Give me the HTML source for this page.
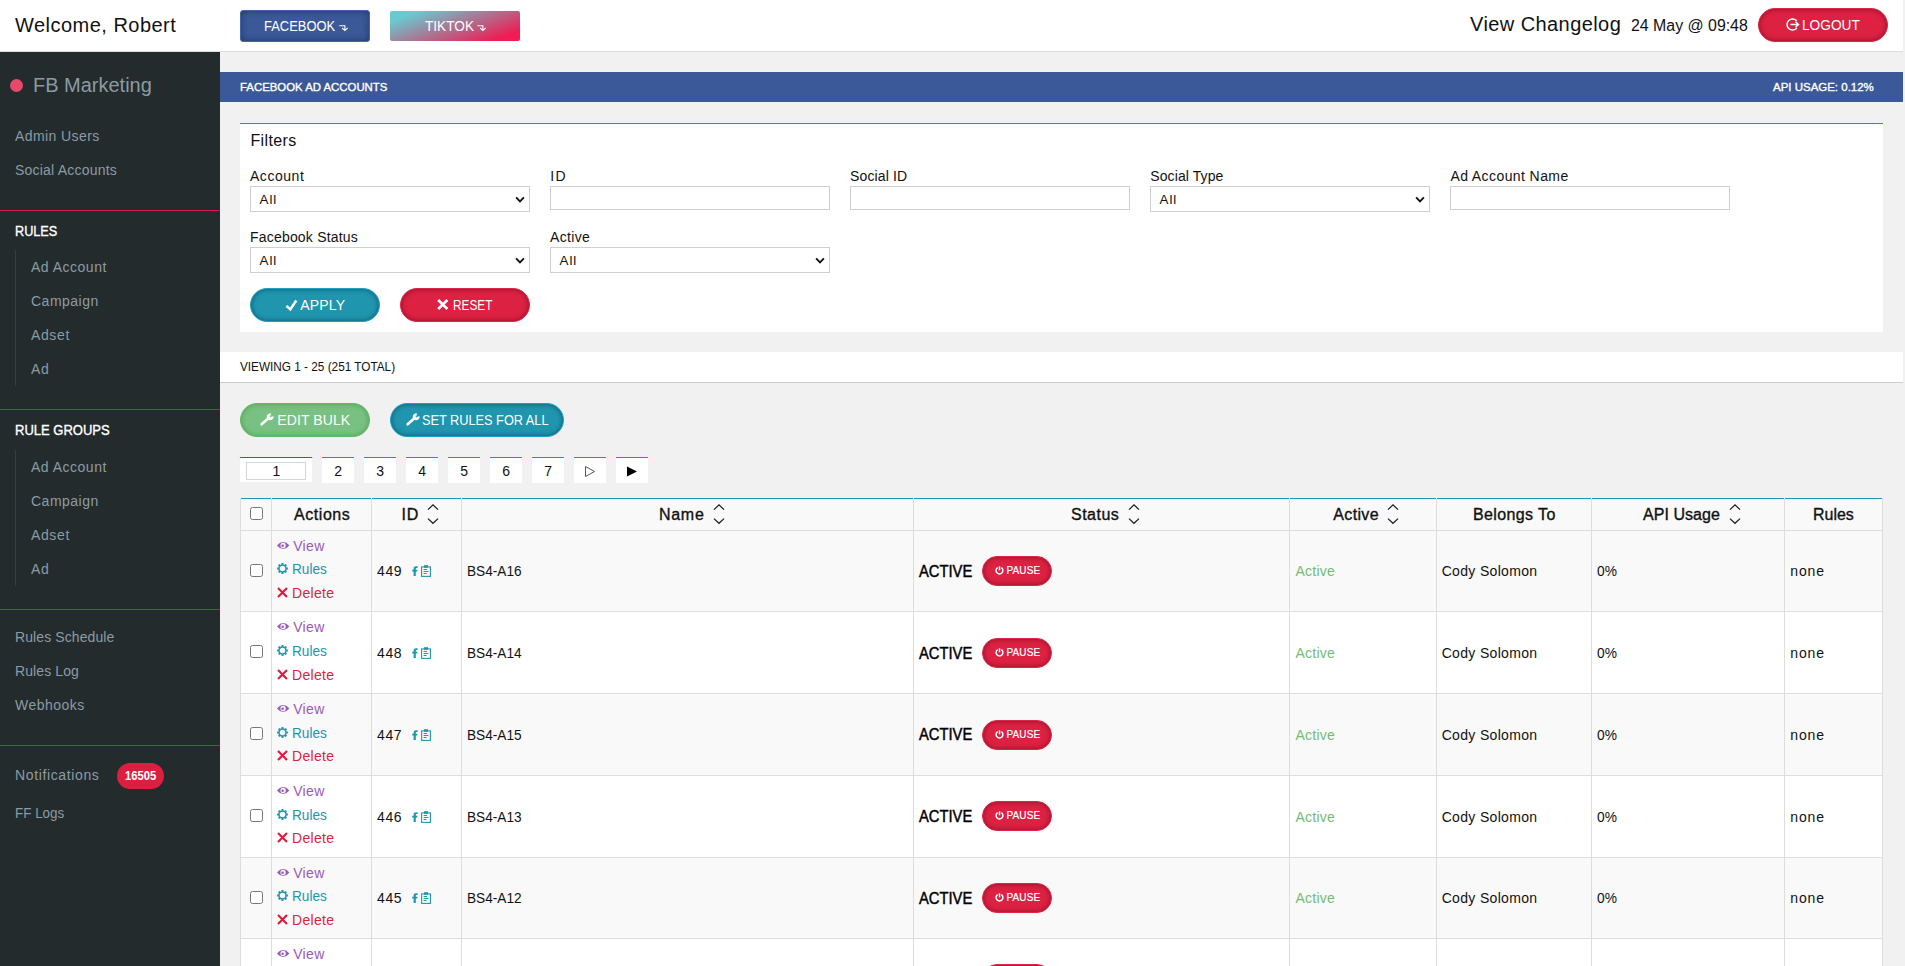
<!DOCTYPE html>
<html><head><meta charset="utf-8"><title>Facebook Ad Accounts</title>
<style>
*{box-sizing:border-box}
html,body{margin:0;padding:0;width:1905px;height:966px;overflow:hidden}
body{width:1905px;height:966px;overflow:hidden;background:#f1f1f1;font-family:"Liberation Sans",sans-serif;font-size:14px;color:#111;position:relative}
#page{position:absolute;left:0;top:0;width:1905px;height:966px;overflow:hidden;background:#f1f1f1}
.abs{position:absolute}
.t{position:absolute;white-space:nowrap;line-height:1}
.m{-webkit-text-stroke:0.35px currentColor}
.m2{-webkit-text-stroke:0.45px currentColor}
.m1{-webkit-text-stroke:0.2px currentColor}
svg{position:absolute;overflow:visible}
</style></head>
<body>
<div id="page">
<div class="abs" style="left:0px;top:0px;width:1903px;height:52px;background:#fff;border-bottom:1px solid #dcdcdc"></div>
<span id="welcome" class="t" style="left:15px;top:15px;font-size:20px;color:#111;letter-spacing:0.476px">Welcome, Robert</span>
<div class="abs" style="left:240px;top:10px;width:130px;height:32px;background:#3b5998;border:1px solid #4464ad;border-radius:3px;box-shadow:inset 0 0 7px rgba(0,0,30,.4)"></div>
<span id="fbbtn" class="t" style="left:263.5px;top:19px;font-size:14px;color:#fff;transform:scaleX(0.9248);transform-origin:0 0">FACEBOOK</span>
<svg style="left:338.6px;top:24.6px" width="9.2" height="6.4" viewBox="0 0 10 7"><path d="M0.4 0.9 H6.4 V5.6 M3.4 3.3 L6.4 6.1 L9.4 3.3" fill="none" stroke="#fff" stroke-width="1.2"/></svg>
<div class="abs" style="left:390px;top:11px;width:130px;height:30px;border-radius:2px;background:linear-gradient(160deg,#66ccd2 0%,#69c9d0 14%,#ee1d52 87%,#ee1d52 100%)"></div>
<span id="ttbtn" class="t" style="left:425px;top:19px;font-size:14px;color:#fff;transform:scaleX(0.9735);transform-origin:0 0">TIKTOK</span>
<svg style="left:476.8px;top:24.6px" width="9.2" height="6.4" viewBox="0 0 10 7"><path d="M0.4 0.9 H6.4 V5.6 M3.4 3.3 L6.4 6.1 L9.4 3.3" fill="none" stroke="#fff" stroke-width="1.2"/></svg>
<span id="changelog" class="t" style="left:1470px;top:14px;font-size:20px;color:#111;letter-spacing:0.423px">View Changelog</span>
<span id="date" class="t" style="left:1630.8px;top:18px;font-size:16px;color:#111;transform:scaleX(0.9928);transform-origin:0 0">24 May @ 09:48</span>
<div class="abs" style="left:1758px;top:8px;width:130px;height:34px;background:#dc2142;border:1px solid #dc2646;box-shadow:inset 0 0 5px rgba(80,0,20,.6);border-radius:17px"></div>
<svg style="left:1785.6px;top:17.7px" width="14" height="13" viewBox="0 0 14 13"><path d="M10.9 2.9 A5.6 5.6 0 1 0 10.9 10.1" fill="none" stroke="#fff" stroke-width="1.5"/><path d="M4.4 6.5 H12.2 M9.5 3.8 L12.5 6.5 L9.5 9.2" fill="none" stroke="#fff" stroke-width="1.5"/></svg>
<span id="logout" class="t" style="left:1802.4px;top:18px;font-size:14px;color:#fff;transform:scaleX(0.9773);transform-origin:0 0">LOGOUT</span>
<div class="abs" style="left:0px;top:52px;width:220px;height:914px;background:#232b2d"></div>
<div class="abs" style="left:10px;top:79px;width:13px;height:13px;border-radius:50%;background:#e8486a"></div>
<span id="fbm" class="t" style="left:32.5px;top:75px;font-size:20px;color:#8c9ba3;transform:scaleX(0.9988);transform-origin:0 0">FB Marketing</span>
<span id="s_admin" class="t" style="left:15px;top:129px;font-size:14px;color:#8c9ba3;letter-spacing:0.416px">Admin Users</span>
<span id="s_social" class="t" style="left:15px;top:163px;font-size:14px;color:#8c9ba3;letter-spacing:0.211px">Social Accounts</span>
<div class="abs" style="left:0px;top:210px;width:220px;height:1px;background:#d81e3f"></div>
<span id="s_rules" class="t m" style="left:15px;top:224px;font-size:14px;color:#fff;transform:scaleX(0.9044);transform-origin:0 0">RULES</span>
<div class="abs" style="left:15px;top:250px;width:1px;height:136px;background:#363e41"></div>
<span id="s_r1" class="t" style="left:31px;top:260px;font-size:14px;color:#8c9ba3;letter-spacing:0.497px">Ad Account</span>
<span id="s_r2" class="t" style="left:31px;top:294px;font-size:14px;color:#8c9ba3;letter-spacing:0.496px">Campaign</span>
<span id="s_r3" class="t" style="left:31px;top:328px;font-size:14px;color:#8c9ba3;letter-spacing:0.622px">Adset</span>
<span id="s_r4" class="t" style="left:31px;top:362px;font-size:14px;color:#8c9ba3;letter-spacing:0.675px">Ad</span>
<div class="abs" style="left:0px;top:409px;width:220px;height:1px;background:#d81e3f"></div>
<span id="s_rg" class="t m" style="left:15px;top:423px;font-size:14px;color:#fff;transform:scaleX(0.9296);transform-origin:0 0">RULE GROUPS</span>
<div class="abs" style="left:15px;top:450px;width:1px;height:136px;background:#363e41"></div>
<span id="s_g1" class="t" style="left:31px;top:460px;font-size:14px;color:#8c9ba3;letter-spacing:0.497px">Ad Account</span>
<span id="s_g2" class="t" style="left:31px;top:494px;font-size:14px;color:#8c9ba3;letter-spacing:0.496px">Campaign</span>
<span id="s_g3" class="t" style="left:31px;top:528px;font-size:14px;color:#8c9ba3;letter-spacing:0.622px">Adset</span>
<span id="s_g4" class="t" style="left:31px;top:562px;font-size:14px;color:#8c9ba3;letter-spacing:0.675px">Ad</span>
<div class="abs" style="left:0px;top:609px;width:220px;height:1px;background:#d81e3f"></div>
<span id="s_sched" class="t" style="left:15px;top:630px;font-size:14px;color:#8c9ba3;letter-spacing:0.095px">Rules Schedule</span>
<span id="s_log" class="t" style="left:15px;top:664px;font-size:14px;color:#8c9ba3;letter-spacing:0.094px">Rules Log</span>
<span id="s_web" class="t" style="left:15px;top:698px;font-size:14px;color:#8c9ba3;letter-spacing:0.485px">Webhooks</span>
<div class="abs" style="left:0px;top:745px;width:220px;height:1px;background:#d81e3f"></div>
<span id="s_notif" class="t" style="left:15px;top:768px;font-size:14px;color:#8c9ba3;letter-spacing:0.628px">Notifications</span>
<div class="abs" style="left:117px;top:763px;width:47px;height:26px;border-radius:13px;background:#dc1f40"></div>
<span id="badge" class="t" style="left:125.3px;top:770px;font-size:12px;color:#fff;font-weight:bold;transform:scaleX(0.9363);transform-origin:0 0">16505</span>
<span id="s_ff" class="t" style="left:15px;top:806px;font-size:14px;color:#8c9ba3;transform:scaleX(0.9593);transform-origin:0 0">FF Logs</span>
<div class="abs" style="left:220px;top:72px;width:1683px;height:30px;background:#3b5998"></div>
<span id="title" class="t m" style="left:240.3px;top:82px;font-size:11.5px;color:#fff;transform:scaleX(0.9898);transform-origin:0 0">FACEBOOK AD ACCOUNTS</span>
<span id="api" class="t m" style="left:1772.5px;top:82px;font-size:11.5px;color:#fff;transform:scaleX(0.9980);transform-origin:0 0">API USAGE: 0.12%</span>
<div class="abs" style="left:240px;top:123px;width:1643px;height:209px;background:#fff;border-top:1px solid #2096ae"></div>
<span id="filters" class="t" style="left:250.4px;top:133px;font-size:16px;color:#111;letter-spacing:0.373px">Filters</span>
<span id="l_acc" class="t" style="left:250px;top:169px;font-size:14px;color:#111;letter-spacing:0.534px">Account</span>
<div class="abs" style="left:250px;top:186px;width:280px;height:26px;background:#fff;border:1px solid #cfcfcf"></div>
<svg style="left:514.6px;top:195.8px" width="10" height="8" viewBox="0 0 10 8"><path d="M1.1 1.4 L5 5.3 L8.9 1.4" fill="none" stroke="#111" stroke-width="1.9"/></svg>
<span id="sel1" class="t" style="left:259.6px;top:193px;font-size:13.33px;color:#111;letter-spacing:0.894px">All</span>
<span id="l_id" class="t" style="left:550.2px;top:169px;font-size:14px;color:#111;letter-spacing:1.400px">ID</span>
<div class="abs" style="left:550px;top:186px;width:280px;height:24px;background:#fff;border:1px solid #cfcfcf"></div>
<span id="l_sid" class="t" style="left:850px;top:169px;font-size:14px;color:#111;letter-spacing:0.134px">Social ID</span>
<div class="abs" style="left:850px;top:186px;width:280px;height:24px;background:#fff;border:1px solid #cfcfcf"></div>
<span id="l_st" class="t" style="left:1150.3px;top:169px;font-size:14px;color:#111;letter-spacing:0.097px">Social Type</span>
<div class="abs" style="left:1150px;top:186px;width:280px;height:26px;background:#fff;border:1px solid #cfcfcf"></div>
<svg style="left:1414.6px;top:195.8px" width="10" height="8" viewBox="0 0 10 8"><path d="M1.1 1.4 L5 5.3 L8.9 1.4" fill="none" stroke="#111" stroke-width="1.9"/></svg>
<span id="sel2" class="t" style="left:1159.6px;top:193px;font-size:13.33px;color:#111;letter-spacing:0.894px">All</span>
<span id="l_an" class="t" style="left:1450.4px;top:169px;font-size:14px;color:#111;letter-spacing:0.410px">Ad Account Name</span>
<div class="abs" style="left:1450px;top:186px;width:280px;height:24px;background:#fff;border:1px solid #cfcfcf"></div>
<span id="l_fs" class="t" style="left:250px;top:230px;font-size:14px;color:#111;letter-spacing:0.196px">Facebook Status</span>
<div class="abs" style="left:250px;top:247px;width:280px;height:26px;background:#fff;border:1px solid #cfcfcf"></div>
<svg style="left:514.6px;top:256.8px" width="10" height="8" viewBox="0 0 10 8"><path d="M1.1 1.4 L5 5.3 L8.9 1.4" fill="none" stroke="#111" stroke-width="1.9"/></svg>
<span id="sel3" class="t" style="left:259.6px;top:254px;font-size:13.33px;color:#111;letter-spacing:0.894px">All</span>
<span id="l_act" class="t" style="left:550px;top:230px;font-size:14px;color:#111;letter-spacing:0.335px">Active</span>
<div class="abs" style="left:550px;top:247px;width:280px;height:26px;background:#fff;border:1px solid #cfcfcf"></div>
<svg style="left:814.6px;top:256.8px" width="10" height="8" viewBox="0 0 10 8"><path d="M1.1 1.4 L5 5.3 L8.9 1.4" fill="none" stroke="#111" stroke-width="1.9"/></svg>
<span id="sel4" class="t" style="left:559.6px;top:254px;font-size:13.33px;color:#111;letter-spacing:0.894px">All</span>
<div class="abs" style="left:250px;top:288px;width:130px;height:34px;background:#2095ae;border:1px solid #1ba3c6;box-shadow:inset 0 0 5px rgba(0,40,60,.6);border-radius:17px"></div>
<svg style="left:285px;top:298.5px" width="13" height="12" viewBox="0 0 13 12"><path d="M1.4 6.9 L5.3 10.4 L11.3 1.5" fill="none" stroke="#fff" stroke-width="2.5"/></svg>
<span id="apply" class="t" style="left:300.2px;top:298px;font-size:14px;color:#fff;letter-spacing:0.173px">APPLY</span>
<div class="abs" style="left:400px;top:288px;width:130px;height:34px;background:#dc2142;border:1px solid #dc2646;box-shadow:inset 0 0 5px rgba(80,0,20,.6);border-radius:17px"></div>
<svg style="left:437.4px;top:299px" width="11.6" height="11" viewBox="0 0 11.6 11"><path d="M1.2 1 L10.4 10 M10.4 1 L1.2 10" stroke="#fff" stroke-width="2.6" fill="none"/></svg>
<span id="reset" class="t" style="left:453.1px;top:298px;font-size:14px;color:#fff;transform:scaleX(0.8434);transform-origin:0 0">RESET</span>
<div class="abs" style="left:220px;top:352px;width:1683px;height:31px;background:#fff;border-bottom:1px solid #cccccc"></div>
<span id="viewing" class="t" style="left:240px;top:361px;font-size:12px;color:#111;transform:scaleX(0.9812);transform-origin:0 0">VIEWING 1 - 25 (251 TOTAL)</span>
<div class="abs" style="left:240px;top:403px;width:130px;height:34px;background:#79c182;border:1px solid #62b76b;box-shadow:inset 0 0 5px rgba(50,150,60,.7);border-radius:17px"></div>
<svg style="left:260.2px;top:413px" width="14" height="13" viewBox="0 0 14 13"><path d="M1.6 11.3 L9.3 4.6" stroke="#fff" stroke-width="2.6" stroke-linecap="round" fill="none"/><path d="M12.38 3.53 A2.2 2.2 0 1 1 10.69 1.66" fill="none" stroke="#fff" stroke-width="2.6"/></svg>
<span id="editbulk" class="t" style="left:277.3px;top:413px;font-size:14px;color:#fff;letter-spacing:0.099px">EDIT BULK</span>
<div class="abs" style="left:390px;top:403px;width:174px;height:34px;background:#2095ae;border:1px solid #1ba3c6;box-shadow:inset 0 0 5px rgba(0,40,60,.6);border-radius:17px"></div>
<svg style="left:405.6px;top:413px" width="14" height="13" viewBox="0 0 14 13"><path d="M1.6 11.3 L9.3 4.6" stroke="#fff" stroke-width="2.6" stroke-linecap="round" fill="none"/><path d="M12.38 3.53 A2.2 2.2 0 1 1 10.69 1.66" fill="none" stroke="#fff" stroke-width="2.6"/></svg>
<span id="setrules" class="t" style="left:422.4px;top:413px;font-size:14px;color:#fff;transform:scaleX(0.9102);transform-origin:0 0">SET RULES FOR ALL</span>
<div class="abs" style="left:240px;top:457px;width:72px;height:25px;background:#fff;border-top:1px solid #dc1f40"></div>
<div class="abs" style="left:246px;top:462px;width:60px;height:18px;background:#fff;border:1px solid #d4d4d4"></div>
<span id="pg1" class="t" style="left:272.5px;top:464px;font-size:14px;color:#111">1</span>
<div class="abs" style="left:322px;top:457px;width:32px;height:26px;background:#fff;border-top:1px solid #2096ae"></div>
<span id="pg2" class="t" style="left:334.2px;top:464px;font-size:14px;color:#111">2</span>
<div class="abs" style="left:364px;top:457px;width:32px;height:26px;background:#fff;border-top:1px solid #2096ae"></div>
<span id="pg3" class="t" style="left:376.2px;top:464px;font-size:14px;color:#111">3</span>
<div class="abs" style="left:406px;top:457px;width:32px;height:26px;background:#fff;border-top:1px solid #2096ae"></div>
<span id="pg4" class="t" style="left:418.2px;top:464px;font-size:14px;color:#111">4</span>
<div class="abs" style="left:448px;top:457px;width:32px;height:26px;background:#fff;border-top:1px solid #2096ae"></div>
<span id="pg5" class="t" style="left:460.2px;top:464px;font-size:14px;color:#111">5</span>
<div class="abs" style="left:490px;top:457px;width:32px;height:26px;background:#fff;border-top:1px solid #2096ae"></div>
<span id="pg6" class="t" style="left:502.2px;top:464px;font-size:14px;color:#111">6</span>
<div class="abs" style="left:532px;top:457px;width:32px;height:26px;background:#fff;border-top:1px solid #2096ae"></div>
<span id="pg7" class="t" style="left:544.2px;top:464px;font-size:14px;color:#111">7</span>
<div class="abs" style="left:574px;top:457px;width:32px;height:26px;background:#fff;border-top:1px solid #2096ae"></div>
<svg style="left:584px;top:464.5px" width="12" height="13" viewBox="0 0 12 13"><path d="M1.5 1.5 L10.5 6.5 L1.5 11.5 Z" fill="none" stroke="#555" stroke-width="1"/></svg>
<div class="abs" style="left:616px;top:457px;width:32px;height:26px;background:#fff;border-top:1px solid #2096ae"></div>
<svg style="left:626px;top:465.5px" width="12" height="11" viewBox="0 0 12 11"><path d="M1 0.5 L11 5.5 L1 10.5 Z" fill="#000"/></svg>
<div class="abs" style="left:240px;top:498px;width:1643px;height:33px;background:#f9f9f9;border-top:1px solid #2096ae"></div>
<div class="abs" style="left:240px;top:530px;width:1643px;height:81px;background:#f9f9f9;border-top:1px solid #dddddd"></div>
<div class="abs" style="left:240px;top:611px;width:1643px;height:82px;background:#ffffff;border-top:1px solid #dddddd"></div>
<div class="abs" style="left:240px;top:693px;width:1643px;height:82px;background:#f9f9f9;border-top:1px solid #dddddd"></div>
<div class="abs" style="left:240px;top:775px;width:1643px;height:82px;background:#ffffff;border-top:1px solid #dddddd"></div>
<div class="abs" style="left:240px;top:857px;width:1643px;height:81px;background:#f9f9f9;border-top:1px solid #dddddd"></div>
<div class="abs" style="left:240px;top:938px;width:1643px;height:82px;background:#ffffff;border-top:1px solid #dddddd"></div>
<div class="abs" style="left:240px;top:498px;width:1px;height:480px;background:#dddddd"></div>
<div class="abs" style="left:271px;top:498px;width:1px;height:480px;background:#dddddd"></div>
<div class="abs" style="left:371px;top:498px;width:1px;height:480px;background:#dddddd"></div>
<div class="abs" style="left:461px;top:498px;width:1px;height:480px;background:#dddddd"></div>
<div class="abs" style="left:913px;top:498px;width:1px;height:480px;background:#dddddd"></div>
<div class="abs" style="left:1289px;top:498px;width:1px;height:480px;background:#dddddd"></div>
<div class="abs" style="left:1436px;top:498px;width:1px;height:480px;background:#dddddd"></div>
<div class="abs" style="left:1591px;top:498px;width:1px;height:480px;background:#dddddd"></div>
<div class="abs" style="left:1784px;top:498px;width:1px;height:480px;background:#dddddd"></div>
<div class="abs" style="left:1882px;top:498px;width:1px;height:480px;background:#dddddd"></div>
<div class="abs" style="left:250px;top:507px;width:13px;height:13px;background:#fff;border:1px solid #767676;border-radius:2.5px"></div>
<span id="h_act" class="t m" style="left:294px;top:507px;font-size:16px;color:#111;letter-spacing:0.555px">Actions</span>
<span id="h_id" class="t m" style="left:401.4px;top:507px;font-size:16px;color:#111;letter-spacing:0.800px">ID</span>
<svg style="left:427px;top:504px" width="12" height="21" viewBox="0 0 12 21"><path d="M1 5.6 L6 0.9 L11 5.6 M1 14.6 L6 19.3 L11 14.6" fill="none" stroke="#222" stroke-width="1.3"/></svg>
<span id="h_name" class="t m" style="left:659px;top:507px;font-size:16px;color:#111;letter-spacing:0.704px">Name</span>
<svg style="left:712.5px;top:504px" width="12" height="21" viewBox="0 0 12 21"><path d="M1 5.6 L6 0.9 L11 5.6 M1 14.6 L6 19.3 L11 14.6" fill="none" stroke="#222" stroke-width="1.3"/></svg>
<span id="h_status" class="t m" style="left:1071px;top:507px;font-size:16px;color:#111;letter-spacing:0.488px">Status</span>
<svg style="left:1127.5px;top:504px" width="12" height="21" viewBox="0 0 12 21"><path d="M1 5.6 L6 0.9 L11 5.6 M1 14.6 L6 19.3 L11 14.6" fill="none" stroke="#222" stroke-width="1.3"/></svg>
<span id="h_active" class="t m" style="left:1333.3px;top:507px;font-size:16px;color:#111;letter-spacing:0.344px">Active</span>
<svg style="left:1387px;top:504px" width="12" height="21" viewBox="0 0 12 21"><path d="M1 5.6 L6 0.9 L11 5.6 M1 14.6 L6 19.3 L11 14.6" fill="none" stroke="#222" stroke-width="1.3"/></svg>
<span id="h_bel" class="t m" style="left:1473px;top:507px;font-size:16px;color:#111;letter-spacing:0.381px">Belongs To</span>
<span id="h_api" class="t m" style="left:1643px;top:507px;font-size:16px;color:#111;letter-spacing:0.039px">API Usage</span>
<svg style="left:1728.5px;top:504px" width="12" height="21" viewBox="0 0 12 21"><path d="M1 5.6 L6 0.9 L11 5.6 M1 14.6 L6 19.3 L11 14.6" fill="none" stroke="#222" stroke-width="1.3"/></svg>
<span id="h_rules" class="t m" style="left:1813.3px;top:507px;font-size:16px;color:#111;transform:scaleX(0.9974);transform-origin:0 0">Rules</span>
<div class="abs" style="left:250px;top:564px;width:13px;height:13px;background:#fff;border:1px solid #767676;border-radius:2.5px"></div>
<svg style="left:276.9px;top:542px" width="12.4" height="7" viewBox="0 0 12.4 7"><path d="M0 3.5 Q2.9 0 6.2 0 Q9.5 0 12.4 3.5 Q9.5 7 6.2 7 Q2.9 7 0 3.5 Z" fill="#9b59b6"/><circle cx="6.1" cy="3.5" r="2.65" fill="#f9f9f9"/><circle cx="5.6" cy="3.8" r="1.25" fill="#9b59b6"/></svg>
<span id="v0" class="t" style="left:293.2px;top:539px;font-size:14px;color:#9b59b6;letter-spacing:0.335px">View</span>
<svg style="left:276.8px;top:562.6px" width="11" height="11" viewBox="0 0 11 11"><path d="M10.92 4.57 L10.92 6.43 L9.61 6.59 L9.19 7.61 L9.99 8.68 L8.68 9.99 L7.63 9.18 L6.61 9.60 L6.43 10.92 L4.57 10.92 L4.41 9.61 L3.39 9.19 L2.32 9.99 L1.01 8.68 L1.82 7.63 L1.40 6.61 L0.08 6.43 L0.08 4.57 L1.39 4.41 L1.81 3.39 L1.01 2.32 L2.32 1.01 L3.37 1.82 L4.39 1.40 L4.57 0.08 L6.43 0.08 L6.59 1.39 L7.61 1.81 L8.68 1.01 L9.99 2.32 L9.18 3.37 L9.60 4.39 Z" fill="#2096ae"/><circle cx="5.5" cy="5.5" r="2.75" fill="#f9f9f9"/></svg>
<span id="r0" class="t" style="left:291.9px;top:562px;font-size:14px;color:#2096ae;transform:scaleX(0.9715);transform-origin:0 0">Rules</span>
<svg style="left:276.8px;top:587.2px" width="11" height="11" viewBox="0 0 11 11"><path d="M1 1 L10 10 M10 1 L1 10" stroke="#dc1f40" stroke-width="2.2" fill="none"/></svg>
<span id="d0" class="t" style="left:292px;top:586px;font-size:14px;color:#dc1f40;letter-spacing:0.326px">Delete</span>
<span id="i0" class="t" style="left:377.1px;top:564px;font-size:14px;color:#111;letter-spacing:0.520px">449</span>
<svg style="left:412px;top:566.2px" width="6" height="10" viewBox="0 0 6 10"><path d="M1.6 10 V5.6 H0.2 V3.8 H1.6 V2.6 C1.6 1 2.6 0.2 4 0.2 C4.7 0.2 5.3 0.3 5.6 0.35 V1.9 H4.7 C4 1.9 3.8 2.2 3.8 2.8 V3.8 H5.5 L5.25 5.6 H3.8 V10 Z" fill="#2096ae"/></svg>
<svg style="left:421px;top:565px" width="10" height="12" viewBox="0 0 10 12"><rect x="0.6" y="1.9" width="8.8" height="9.5" fill="none" stroke="#2096ae" stroke-width="1.1"/><rect x="3" y="0.2" width="4" height="2.6" fill="#2096ae"/><path d="M2.6 4.5 H6 M2.6 6.5 H7.4 M2.6 8.5 H5.6" stroke="#2096ae" stroke-width="1"/></svg>
<span id="n0" class="t" style="left:467.4px;top:564px;font-size:14px;color:#111;transform:scaleX(0.9738);transform-origin:0 0">BS4-A16</span>
<span id="a0" class="t m2" style="left:919.2px;top:564px;font-size:16px;color:#000;transform:scaleX(0.9211);transform-origin:0 0">ACTIVE</span>
<div class="abs" style="left:982px;top:556px;width:70px;height:30px;background:#dc2142;border:1px solid #dc2646;box-shadow:inset 0 0 5px rgba(80,0,20,.6);border-radius:15px"></div>
<svg style="left:994.6px;top:566.2px" width="9" height="9" viewBox="0 0 9 9"><path d="M2.6 1.7 A3.4 3.4 0 1 0 6.4 1.7" fill="none" stroke="#fff" stroke-width="1.5"/><path d="M4.5 0.3 V4.3" stroke="#fff" stroke-width="1.5"/></svg>
<span id="p0" class="t m1" style="left:1006.6px;top:566px;font-size:10px;color:#fff;letter-spacing:0.082px">PAUSE</span>
<span id="ac0" class="t" style="left:1295.4px;top:564px;font-size:14px;color:#72bd76;letter-spacing:0.255px">Active</span>
<span id="b0" class="t" style="left:1441.7px;top:564px;font-size:14px;color:#111;letter-spacing:0.325px">Cody Solomon</span>
<span id="u0" class="t" style="left:1597.3px;top:564px;font-size:14px;color:#111;transform:scaleX(0.9828);transform-origin:0 0">0%</span>
<span id="ru0" class="t" style="left:1790.3px;top:564px;font-size:14px;color:#111;letter-spacing:0.848px">none</span>
<div class="abs" style="left:250px;top:645px;width:13px;height:13px;background:#fff;border:1px solid #767676;border-radius:2.5px"></div>
<svg style="left:276.9px;top:623px" width="12.4" height="7" viewBox="0 0 12.4 7"><path d="M0 3.5 Q2.9 0 6.2 0 Q9.5 0 12.4 3.5 Q9.5 7 6.2 7 Q2.9 7 0 3.5 Z" fill="#9b59b6"/><circle cx="6.1" cy="3.5" r="2.65" fill="#ffffff"/><circle cx="5.6" cy="3.8" r="1.25" fill="#9b59b6"/></svg>
<span id="v1" class="t" style="left:293.2px;top:620px;font-size:14px;color:#9b59b6;letter-spacing:0.335px">View</span>
<svg style="left:276.8px;top:644.6px" width="11" height="11" viewBox="0 0 11 11"><path d="M10.92 4.57 L10.92 6.43 L9.61 6.59 L9.19 7.61 L9.99 8.68 L8.68 9.99 L7.63 9.18 L6.61 9.60 L6.43 10.92 L4.57 10.92 L4.41 9.61 L3.39 9.19 L2.32 9.99 L1.01 8.68 L1.82 7.63 L1.40 6.61 L0.08 6.43 L0.08 4.57 L1.39 4.41 L1.81 3.39 L1.01 2.32 L2.32 1.01 L3.37 1.82 L4.39 1.40 L4.57 0.08 L6.43 0.08 L6.59 1.39 L7.61 1.81 L8.68 1.01 L9.99 2.32 L9.18 3.37 L9.60 4.39 Z" fill="#2096ae"/><circle cx="5.5" cy="5.5" r="2.75" fill="#ffffff"/></svg>
<span id="r1" class="t" style="left:291.9px;top:644px;font-size:14px;color:#2096ae;transform:scaleX(0.9715);transform-origin:0 0">Rules</span>
<svg style="left:276.8px;top:669.2px" width="11" height="11" viewBox="0 0 11 11"><path d="M1 1 L10 10 M10 1 L1 10" stroke="#dc1f40" stroke-width="2.2" fill="none"/></svg>
<span id="d1" class="t" style="left:292px;top:668px;font-size:14px;color:#dc1f40;letter-spacing:0.326px">Delete</span>
<span id="i1" class="t" style="left:377.1px;top:646px;font-size:14px;color:#111;letter-spacing:0.520px">448</span>
<svg style="left:412px;top:648.2px" width="6" height="10" viewBox="0 0 6 10"><path d="M1.6 10 V5.6 H0.2 V3.8 H1.6 V2.6 C1.6 1 2.6 0.2 4 0.2 C4.7 0.2 5.3 0.3 5.6 0.35 V1.9 H4.7 C4 1.9 3.8 2.2 3.8 2.8 V3.8 H5.5 L5.25 5.6 H3.8 V10 Z" fill="#2096ae"/></svg>
<svg style="left:421px;top:647px" width="10" height="12" viewBox="0 0 10 12"><rect x="0.6" y="1.9" width="8.8" height="9.5" fill="none" stroke="#2096ae" stroke-width="1.1"/><rect x="3" y="0.2" width="4" height="2.6" fill="#2096ae"/><path d="M2.6 4.5 H6 M2.6 6.5 H7.4 M2.6 8.5 H5.6" stroke="#2096ae" stroke-width="1"/></svg>
<span id="n1" class="t" style="left:467.4px;top:646px;font-size:14px;color:#111;transform:scaleX(0.9738);transform-origin:0 0">BS4-A14</span>
<span id="a1" class="t m2" style="left:919.2px;top:646px;font-size:16px;color:#000;transform:scaleX(0.9211);transform-origin:0 0">ACTIVE</span>
<div class="abs" style="left:982px;top:638px;width:70px;height:30px;background:#dc2142;border:1px solid #dc2646;box-shadow:inset 0 0 5px rgba(80,0,20,.6);border-radius:15px"></div>
<svg style="left:994.6px;top:648.2px" width="9" height="9" viewBox="0 0 9 9"><path d="M2.6 1.7 A3.4 3.4 0 1 0 6.4 1.7" fill="none" stroke="#fff" stroke-width="1.5"/><path d="M4.5 0.3 V4.3" stroke="#fff" stroke-width="1.5"/></svg>
<span id="p1" class="t m1" style="left:1006.6px;top:648px;font-size:10px;color:#fff;letter-spacing:0.082px">PAUSE</span>
<span id="ac1" class="t" style="left:1295.4px;top:646px;font-size:14px;color:#72bd76;letter-spacing:0.255px">Active</span>
<span id="b1" class="t" style="left:1441.7px;top:646px;font-size:14px;color:#111;letter-spacing:0.325px">Cody Solomon</span>
<span id="u1" class="t" style="left:1597.3px;top:646px;font-size:14px;color:#111;transform:scaleX(0.9828);transform-origin:0 0">0%</span>
<span id="ru1" class="t" style="left:1790.3px;top:646px;font-size:14px;color:#111;letter-spacing:0.848px">none</span>
<div class="abs" style="left:250px;top:727px;width:13px;height:13px;background:#fff;border:1px solid #767676;border-radius:2.5px"></div>
<svg style="left:276.9px;top:705px" width="12.4" height="7" viewBox="0 0 12.4 7"><path d="M0 3.5 Q2.9 0 6.2 0 Q9.5 0 12.4 3.5 Q9.5 7 6.2 7 Q2.9 7 0 3.5 Z" fill="#9b59b6"/><circle cx="6.1" cy="3.5" r="2.65" fill="#f9f9f9"/><circle cx="5.6" cy="3.8" r="1.25" fill="#9b59b6"/></svg>
<span id="v2" class="t" style="left:293.2px;top:702px;font-size:14px;color:#9b59b6;letter-spacing:0.335px">View</span>
<svg style="left:276.8px;top:726.6px" width="11" height="11" viewBox="0 0 11 11"><path d="M10.92 4.57 L10.92 6.43 L9.61 6.59 L9.19 7.61 L9.99 8.68 L8.68 9.99 L7.63 9.18 L6.61 9.60 L6.43 10.92 L4.57 10.92 L4.41 9.61 L3.39 9.19 L2.32 9.99 L1.01 8.68 L1.82 7.63 L1.40 6.61 L0.08 6.43 L0.08 4.57 L1.39 4.41 L1.81 3.39 L1.01 2.32 L2.32 1.01 L3.37 1.82 L4.39 1.40 L4.57 0.08 L6.43 0.08 L6.59 1.39 L7.61 1.81 L8.68 1.01 L9.99 2.32 L9.18 3.37 L9.60 4.39 Z" fill="#2096ae"/><circle cx="5.5" cy="5.5" r="2.75" fill="#f9f9f9"/></svg>
<span id="r2" class="t" style="left:291.9px;top:726px;font-size:14px;color:#2096ae;transform:scaleX(0.9715);transform-origin:0 0">Rules</span>
<svg style="left:276.8px;top:750.2px" width="11" height="11" viewBox="0 0 11 11"><path d="M1 1 L10 10 M10 1 L1 10" stroke="#dc1f40" stroke-width="2.2" fill="none"/></svg>
<span id="d2" class="t" style="left:292px;top:749px;font-size:14px;color:#dc1f40;letter-spacing:0.326px">Delete</span>
<span id="i2" class="t" style="left:377.1px;top:728px;font-size:14px;color:#111;letter-spacing:0.520px">447</span>
<svg style="left:412px;top:730.2px" width="6" height="10" viewBox="0 0 6 10"><path d="M1.6 10 V5.6 H0.2 V3.8 H1.6 V2.6 C1.6 1 2.6 0.2 4 0.2 C4.7 0.2 5.3 0.3 5.6 0.35 V1.9 H4.7 C4 1.9 3.8 2.2 3.8 2.8 V3.8 H5.5 L5.25 5.6 H3.8 V10 Z" fill="#2096ae"/></svg>
<svg style="left:421px;top:729px" width="10" height="12" viewBox="0 0 10 12"><rect x="0.6" y="1.9" width="8.8" height="9.5" fill="none" stroke="#2096ae" stroke-width="1.1"/><rect x="3" y="0.2" width="4" height="2.6" fill="#2096ae"/><path d="M2.6 4.5 H6 M2.6 6.5 H7.4 M2.6 8.5 H5.6" stroke="#2096ae" stroke-width="1"/></svg>
<span id="n2" class="t" style="left:467.4px;top:728px;font-size:14px;color:#111;transform:scaleX(0.9738);transform-origin:0 0">BS4-A15</span>
<span id="a2" class="t m2" style="left:919.2px;top:727px;font-size:16px;color:#000;transform:scaleX(0.9211);transform-origin:0 0">ACTIVE</span>
<div class="abs" style="left:982px;top:720px;width:70px;height:30px;background:#dc2142;border:1px solid #dc2646;box-shadow:inset 0 0 5px rgba(80,0,20,.6);border-radius:15px"></div>
<svg style="left:994.6px;top:730.2px" width="9" height="9" viewBox="0 0 9 9"><path d="M2.6 1.7 A3.4 3.4 0 1 0 6.4 1.7" fill="none" stroke="#fff" stroke-width="1.5"/><path d="M4.5 0.3 V4.3" stroke="#fff" stroke-width="1.5"/></svg>
<span id="p2" class="t m1" style="left:1006.6px;top:730px;font-size:10px;color:#fff;letter-spacing:0.082px">PAUSE</span>
<span id="ac2" class="t" style="left:1295.4px;top:728px;font-size:14px;color:#72bd76;letter-spacing:0.255px">Active</span>
<span id="b2" class="t" style="left:1441.7px;top:728px;font-size:14px;color:#111;letter-spacing:0.325px">Cody Solomon</span>
<span id="u2" class="t" style="left:1597.3px;top:728px;font-size:14px;color:#111;transform:scaleX(0.9828);transform-origin:0 0">0%</span>
<span id="ru2" class="t" style="left:1790.3px;top:728px;font-size:14px;color:#111;letter-spacing:0.848px">none</span>
<div class="abs" style="left:250px;top:809px;width:13px;height:13px;background:#fff;border:1px solid #767676;border-radius:2.5px"></div>
<svg style="left:276.9px;top:787px" width="12.4" height="7" viewBox="0 0 12.4 7"><path d="M0 3.5 Q2.9 0 6.2 0 Q9.5 0 12.4 3.5 Q9.5 7 6.2 7 Q2.9 7 0 3.5 Z" fill="#9b59b6"/><circle cx="6.1" cy="3.5" r="2.65" fill="#ffffff"/><circle cx="5.6" cy="3.8" r="1.25" fill="#9b59b6"/></svg>
<span id="v3" class="t" style="left:293.2px;top:784px;font-size:14px;color:#9b59b6;letter-spacing:0.335px">View</span>
<svg style="left:276.8px;top:808.6px" width="11" height="11" viewBox="0 0 11 11"><path d="M10.92 4.57 L10.92 6.43 L9.61 6.59 L9.19 7.61 L9.99 8.68 L8.68 9.99 L7.63 9.18 L6.61 9.60 L6.43 10.92 L4.57 10.92 L4.41 9.61 L3.39 9.19 L2.32 9.99 L1.01 8.68 L1.82 7.63 L1.40 6.61 L0.08 6.43 L0.08 4.57 L1.39 4.41 L1.81 3.39 L1.01 2.32 L2.32 1.01 L3.37 1.82 L4.39 1.40 L4.57 0.08 L6.43 0.08 L6.59 1.39 L7.61 1.81 L8.68 1.01 L9.99 2.32 L9.18 3.37 L9.60 4.39 Z" fill="#2096ae"/><circle cx="5.5" cy="5.5" r="2.75" fill="#ffffff"/></svg>
<span id="r3" class="t" style="left:291.9px;top:808px;font-size:14px;color:#2096ae;transform:scaleX(0.9715);transform-origin:0 0">Rules</span>
<svg style="left:276.8px;top:832.2px" width="11" height="11" viewBox="0 0 11 11"><path d="M1 1 L10 10 M10 1 L1 10" stroke="#dc1f40" stroke-width="2.2" fill="none"/></svg>
<span id="d3" class="t" style="left:292px;top:831px;font-size:14px;color:#dc1f40;letter-spacing:0.326px">Delete</span>
<span id="i3" class="t" style="left:377.1px;top:810px;font-size:14px;color:#111;letter-spacing:0.520px">446</span>
<svg style="left:412px;top:812.2px" width="6" height="10" viewBox="0 0 6 10"><path d="M1.6 10 V5.6 H0.2 V3.8 H1.6 V2.6 C1.6 1 2.6 0.2 4 0.2 C4.7 0.2 5.3 0.3 5.6 0.35 V1.9 H4.7 C4 1.9 3.8 2.2 3.8 2.8 V3.8 H5.5 L5.25 5.6 H3.8 V10 Z" fill="#2096ae"/></svg>
<svg style="left:421px;top:811px" width="10" height="12" viewBox="0 0 10 12"><rect x="0.6" y="1.9" width="8.8" height="9.5" fill="none" stroke="#2096ae" stroke-width="1.1"/><rect x="3" y="0.2" width="4" height="2.6" fill="#2096ae"/><path d="M2.6 4.5 H6 M2.6 6.5 H7.4 M2.6 8.5 H5.6" stroke="#2096ae" stroke-width="1"/></svg>
<span id="n3" class="t" style="left:467.4px;top:810px;font-size:14px;color:#111;transform:scaleX(0.9738);transform-origin:0 0">BS4-A13</span>
<span id="a3" class="t m2" style="left:919.2px;top:809px;font-size:16px;color:#000;transform:scaleX(0.9211);transform-origin:0 0">ACTIVE</span>
<div class="abs" style="left:982px;top:801px;width:70px;height:30px;background:#dc2142;border:1px solid #dc2646;box-shadow:inset 0 0 5px rgba(80,0,20,.6);border-radius:15px"></div>
<svg style="left:994.6px;top:811.2px" width="9" height="9" viewBox="0 0 9 9"><path d="M2.6 1.7 A3.4 3.4 0 1 0 6.4 1.7" fill="none" stroke="#fff" stroke-width="1.5"/><path d="M4.5 0.3 V4.3" stroke="#fff" stroke-width="1.5"/></svg>
<span id="p3" class="t m1" style="left:1006.6px;top:811px;font-size:10px;color:#fff;letter-spacing:0.082px">PAUSE</span>
<span id="ac3" class="t" style="left:1295.4px;top:810px;font-size:14px;color:#72bd76;letter-spacing:0.255px">Active</span>
<span id="b3" class="t" style="left:1441.7px;top:810px;font-size:14px;color:#111;letter-spacing:0.325px">Cody Solomon</span>
<span id="u3" class="t" style="left:1597.3px;top:810px;font-size:14px;color:#111;transform:scaleX(0.9828);transform-origin:0 0">0%</span>
<span id="ru3" class="t" style="left:1790.3px;top:810px;font-size:14px;color:#111;letter-spacing:0.848px">none</span>
<div class="abs" style="left:250px;top:891px;width:13px;height:13px;background:#fff;border:1px solid #767676;border-radius:2.5px"></div>
<svg style="left:276.9px;top:869px" width="12.4" height="7" viewBox="0 0 12.4 7"><path d="M0 3.5 Q2.9 0 6.2 0 Q9.5 0 12.4 3.5 Q9.5 7 6.2 7 Q2.9 7 0 3.5 Z" fill="#9b59b6"/><circle cx="6.1" cy="3.5" r="2.65" fill="#f9f9f9"/><circle cx="5.6" cy="3.8" r="1.25" fill="#9b59b6"/></svg>
<span id="v4" class="t" style="left:293.2px;top:866px;font-size:14px;color:#9b59b6;letter-spacing:0.335px">View</span>
<svg style="left:276.8px;top:889.6px" width="11" height="11" viewBox="0 0 11 11"><path d="M10.92 4.57 L10.92 6.43 L9.61 6.59 L9.19 7.61 L9.99 8.68 L8.68 9.99 L7.63 9.18 L6.61 9.60 L6.43 10.92 L4.57 10.92 L4.41 9.61 L3.39 9.19 L2.32 9.99 L1.01 8.68 L1.82 7.63 L1.40 6.61 L0.08 6.43 L0.08 4.57 L1.39 4.41 L1.81 3.39 L1.01 2.32 L2.32 1.01 L3.37 1.82 L4.39 1.40 L4.57 0.08 L6.43 0.08 L6.59 1.39 L7.61 1.81 L8.68 1.01 L9.99 2.32 L9.18 3.37 L9.60 4.39 Z" fill="#2096ae"/><circle cx="5.5" cy="5.5" r="2.75" fill="#f9f9f9"/></svg>
<span id="r4" class="t" style="left:291.9px;top:889px;font-size:14px;color:#2096ae;transform:scaleX(0.9715);transform-origin:0 0">Rules</span>
<svg style="left:276.8px;top:914.2px" width="11" height="11" viewBox="0 0 11 11"><path d="M1 1 L10 10 M10 1 L1 10" stroke="#dc1f40" stroke-width="2.2" fill="none"/></svg>
<span id="d4" class="t" style="left:292px;top:913px;font-size:14px;color:#dc1f40;letter-spacing:0.326px">Delete</span>
<span id="i4" class="t" style="left:377.1px;top:891px;font-size:14px;color:#111;letter-spacing:0.520px">445</span>
<svg style="left:412px;top:893.2px" width="6" height="10" viewBox="0 0 6 10"><path d="M1.6 10 V5.6 H0.2 V3.8 H1.6 V2.6 C1.6 1 2.6 0.2 4 0.2 C4.7 0.2 5.3 0.3 5.6 0.35 V1.9 H4.7 C4 1.9 3.8 2.2 3.8 2.8 V3.8 H5.5 L5.25 5.6 H3.8 V10 Z" fill="#2096ae"/></svg>
<svg style="left:421px;top:892px" width="10" height="12" viewBox="0 0 10 12"><rect x="0.6" y="1.9" width="8.8" height="9.5" fill="none" stroke="#2096ae" stroke-width="1.1"/><rect x="3" y="0.2" width="4" height="2.6" fill="#2096ae"/><path d="M2.6 4.5 H6 M2.6 6.5 H7.4 M2.6 8.5 H5.6" stroke="#2096ae" stroke-width="1"/></svg>
<span id="n4" class="t" style="left:467.4px;top:891px;font-size:14px;color:#111;transform:scaleX(0.9738);transform-origin:0 0">BS4-A12</span>
<span id="a4" class="t m2" style="left:919.2px;top:891px;font-size:16px;color:#000;transform:scaleX(0.9211);transform-origin:0 0">ACTIVE</span>
<div class="abs" style="left:982px;top:883px;width:70px;height:30px;background:#dc2142;border:1px solid #dc2646;box-shadow:inset 0 0 5px rgba(80,0,20,.6);border-radius:15px"></div>
<svg style="left:994.6px;top:893.2px" width="9" height="9" viewBox="0 0 9 9"><path d="M2.6 1.7 A3.4 3.4 0 1 0 6.4 1.7" fill="none" stroke="#fff" stroke-width="1.5"/><path d="M4.5 0.3 V4.3" stroke="#fff" stroke-width="1.5"/></svg>
<span id="p4" class="t m1" style="left:1006.6px;top:893px;font-size:10px;color:#fff;letter-spacing:0.082px">PAUSE</span>
<span id="ac4" class="t" style="left:1295.4px;top:891px;font-size:14px;color:#72bd76;letter-spacing:0.255px">Active</span>
<span id="b4" class="t" style="left:1441.7px;top:891px;font-size:14px;color:#111;letter-spacing:0.325px">Cody Solomon</span>
<span id="u4" class="t" style="left:1597.3px;top:891px;font-size:14px;color:#111;transform:scaleX(0.9828);transform-origin:0 0">0%</span>
<span id="ru4" class="t" style="left:1790.3px;top:891px;font-size:14px;color:#111;letter-spacing:0.848px">none</span>
<div class="abs" style="left:250px;top:972px;width:13px;height:13px;background:#fff;border:1px solid #767676;border-radius:2.5px"></div>
<svg style="left:276.9px;top:950px" width="12.4" height="7" viewBox="0 0 12.4 7"><path d="M0 3.5 Q2.9 0 6.2 0 Q9.5 0 12.4 3.5 Q9.5 7 6.2 7 Q2.9 7 0 3.5 Z" fill="#9b59b6"/><circle cx="6.1" cy="3.5" r="2.65" fill="#ffffff"/><circle cx="5.6" cy="3.8" r="1.25" fill="#9b59b6"/></svg>
<span id="v5" class="t" style="left:293.2px;top:947px;font-size:14px;color:#9b59b6;letter-spacing:0.335px">View</span>
<svg style="left:276.8px;top:970.6px" width="11" height="11" viewBox="0 0 11 11"><path d="M10.92 4.57 L10.92 6.43 L9.61 6.59 L9.19 7.61 L9.99 8.68 L8.68 9.99 L7.63 9.18 L6.61 9.60 L6.43 10.92 L4.57 10.92 L4.41 9.61 L3.39 9.19 L2.32 9.99 L1.01 8.68 L1.82 7.63 L1.40 6.61 L0.08 6.43 L0.08 4.57 L1.39 4.41 L1.81 3.39 L1.01 2.32 L2.32 1.01 L3.37 1.82 L4.39 1.40 L4.57 0.08 L6.43 0.08 L6.59 1.39 L7.61 1.81 L8.68 1.01 L9.99 2.32 L9.18 3.37 L9.60 4.39 Z" fill="#2096ae"/><circle cx="5.5" cy="5.5" r="2.75" fill="#ffffff"/></svg>
<span id="r5" class="t" style="left:291.9px;top:970px;font-size:14px;color:#2096ae;transform:scaleX(0.9715);transform-origin:0 0">Rules</span>
<svg style="left:276.8px;top:995.2px" width="11" height="11" viewBox="0 0 11 11"><path d="M1 1 L10 10 M10 1 L1 10" stroke="#dc1f40" stroke-width="2.2" fill="none"/></svg>
<span id="d5" class="t" style="left:292px;top:994px;font-size:14px;color:#dc1f40;letter-spacing:0.326px">Delete</span>
<span id="i5" class="t" style="left:377.1px;top:972px;font-size:14px;color:#111;letter-spacing:0.520px">444</span>
<svg style="left:412px;top:974.2px" width="6" height="10" viewBox="0 0 6 10"><path d="M1.6 10 V5.6 H0.2 V3.8 H1.6 V2.6 C1.6 1 2.6 0.2 4 0.2 C4.7 0.2 5.3 0.3 5.6 0.35 V1.9 H4.7 C4 1.9 3.8 2.2 3.8 2.8 V3.8 H5.5 L5.25 5.6 H3.8 V10 Z" fill="#2096ae"/></svg>
<svg style="left:421px;top:973px" width="10" height="12" viewBox="0 0 10 12"><rect x="0.6" y="1.9" width="8.8" height="9.5" fill="none" stroke="#2096ae" stroke-width="1.1"/><rect x="3" y="0.2" width="4" height="2.6" fill="#2096ae"/><path d="M2.6 4.5 H6 M2.6 6.5 H7.4 M2.6 8.5 H5.6" stroke="#2096ae" stroke-width="1"/></svg>
<span id="n5" class="t" style="left:467.4px;top:972px;font-size:14px;color:#111;transform:scaleX(0.9926);transform-origin:0 0">BS4-A11</span>
<span id="a5" class="t m2" style="left:919.2px;top:972px;font-size:16px;color:#000;transform:scaleX(0.9211);transform-origin:0 0">ACTIVE</span>
<div class="abs" style="left:982px;top:964px;width:70px;height:30px;background:#dc2142;border:1px solid #dc2646;box-shadow:inset 0 0 5px rgba(80,0,20,.6);border-radius:15px"></div>
<svg style="left:994.6px;top:974.2px" width="9" height="9" viewBox="0 0 9 9"><path d="M2.6 1.7 A3.4 3.4 0 1 0 6.4 1.7" fill="none" stroke="#fff" stroke-width="1.5"/><path d="M4.5 0.3 V4.3" stroke="#fff" stroke-width="1.5"/></svg>
<span id="p5" class="t m1" style="left:1006.6px;top:974px;font-size:10px;color:#fff;letter-spacing:0.082px">PAUSE</span>
<span id="ac5" class="t" style="left:1295.4px;top:972px;font-size:14px;color:#72bd76;letter-spacing:0.255px">Active</span>
<span id="b5" class="t" style="left:1441.7px;top:972px;font-size:14px;color:#111;letter-spacing:0.325px">Cody Solomon</span>
<span id="u5" class="t" style="left:1597.3px;top:972px;font-size:14px;color:#111;transform:scaleX(0.9828);transform-origin:0 0">0%</span>
<span id="ru5" class="t" style="left:1790.3px;top:972px;font-size:14px;color:#111;letter-spacing:0.848px">none</span>
</div>
</body></html>
